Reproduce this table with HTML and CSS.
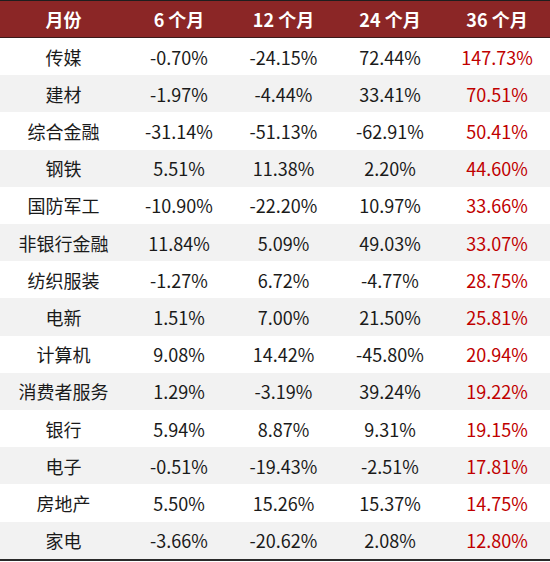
FILE: index.html
```html
<!DOCTYPE html>
<html lang="zh">
<head>
<meta charset="utf-8">
<link rel="stylesheet" href="styles.css">
</head>
<body>
<div class="tbl">
  <div class="row head">
    <div>月份</div><div>6 个月</div><div>12 个月</div><div>24 个月</div><div>36 个月</div>
  </div>
  <div class="row"><div>传媒</div><div>-0.70%</div><div>-24.15%</div><div>72.44%</div><div class="red">147.73%</div></div>
  <div class="row alt"><div>建材</div><div>-1.97%</div><div>-4.44%</div><div>33.41%</div><div class="red">70.51%</div></div>
  <div class="row"><div>综合金融</div><div>-31.14%</div><div>-51.13%</div><div>-62.91%</div><div class="red">50.41%</div></div>
  <div class="row alt"><div>钢铁</div><div>5.51%</div><div>11.38%</div><div>2.20%</div><div class="red">44.60%</div></div>
  <div class="row"><div>国防军工</div><div>-10.90%</div><div>-22.20%</div><div>10.97%</div><div class="red">33.66%</div></div>
  <div class="row alt"><div>非银行金融</div><div>11.84%</div><div>5.09%</div><div>49.03%</div><div class="red">33.07%</div></div>
  <div class="row"><div>纺织服装</div><div>-1.27%</div><div>6.72%</div><div>-4.77%</div><div class="red">28.75%</div></div>
  <div class="row alt"><div>电新</div><div>1.51%</div><div>7.00%</div><div>21.50%</div><div class="red">25.81%</div></div>
  <div class="row"><div>计算机</div><div>9.08%</div><div>14.42%</div><div>-45.80%</div><div class="red">20.94%</div></div>
  <div class="row alt"><div>消费者服务</div><div>1.29%</div><div>-3.19%</div><div>39.24%</div><div class="red">19.22%</div></div>
  <div class="row"><div>银行</div><div>5.94%</div><div>8.87%</div><div>9.31%</div><div class="red">19.15%</div></div>
  <div class="row alt"><div>电子</div><div>-0.51%</div><div>-19.43%</div><div>-2.51%</div><div class="red">17.81%</div></div>
  <div class="row"><div>房地产</div><div>5.50%</div><div>15.26%</div><div>15.37%</div><div class="red">14.75%</div></div>
  <div class="row alt"><div>家电</div><div>-3.66%</div><div>-20.62%</div><div>2.08%</div><div class="red">12.80%</div></div>
</div>
</body>
</html>
```
FILE: styles.css
```css
html, body {
  margin: 0;
  padding: 0;
  background: #ffffff;
}
.tbl {
  width: 550px;
  border-top: 1px solid #1e1e1e;
  border-bottom: 2px solid #2a2a2a;
  font-family: "Noto Sans CJK SC", "Noto Sans", sans-serif;
  font-size: 18px;
  color: #1a1a1a;
}
.row {
  display: grid;
  grid-template-columns: 127px 104px 105px 108px 106px;
  height: 37.21px;
  align-items: center;
  text-align: center;
  background: #ffffff;
}
.row > div {
  line-height: 1;
}
.row.alt {
  background: #f2f2f2;
}
.row.head {
  height: 36px;
  background: #8b2626;
  color: #ffffff;
  font-weight: bold;
  border-bottom: 1px solid #3a1a1a;
}
.red {
  color: #c00000;
}
```
